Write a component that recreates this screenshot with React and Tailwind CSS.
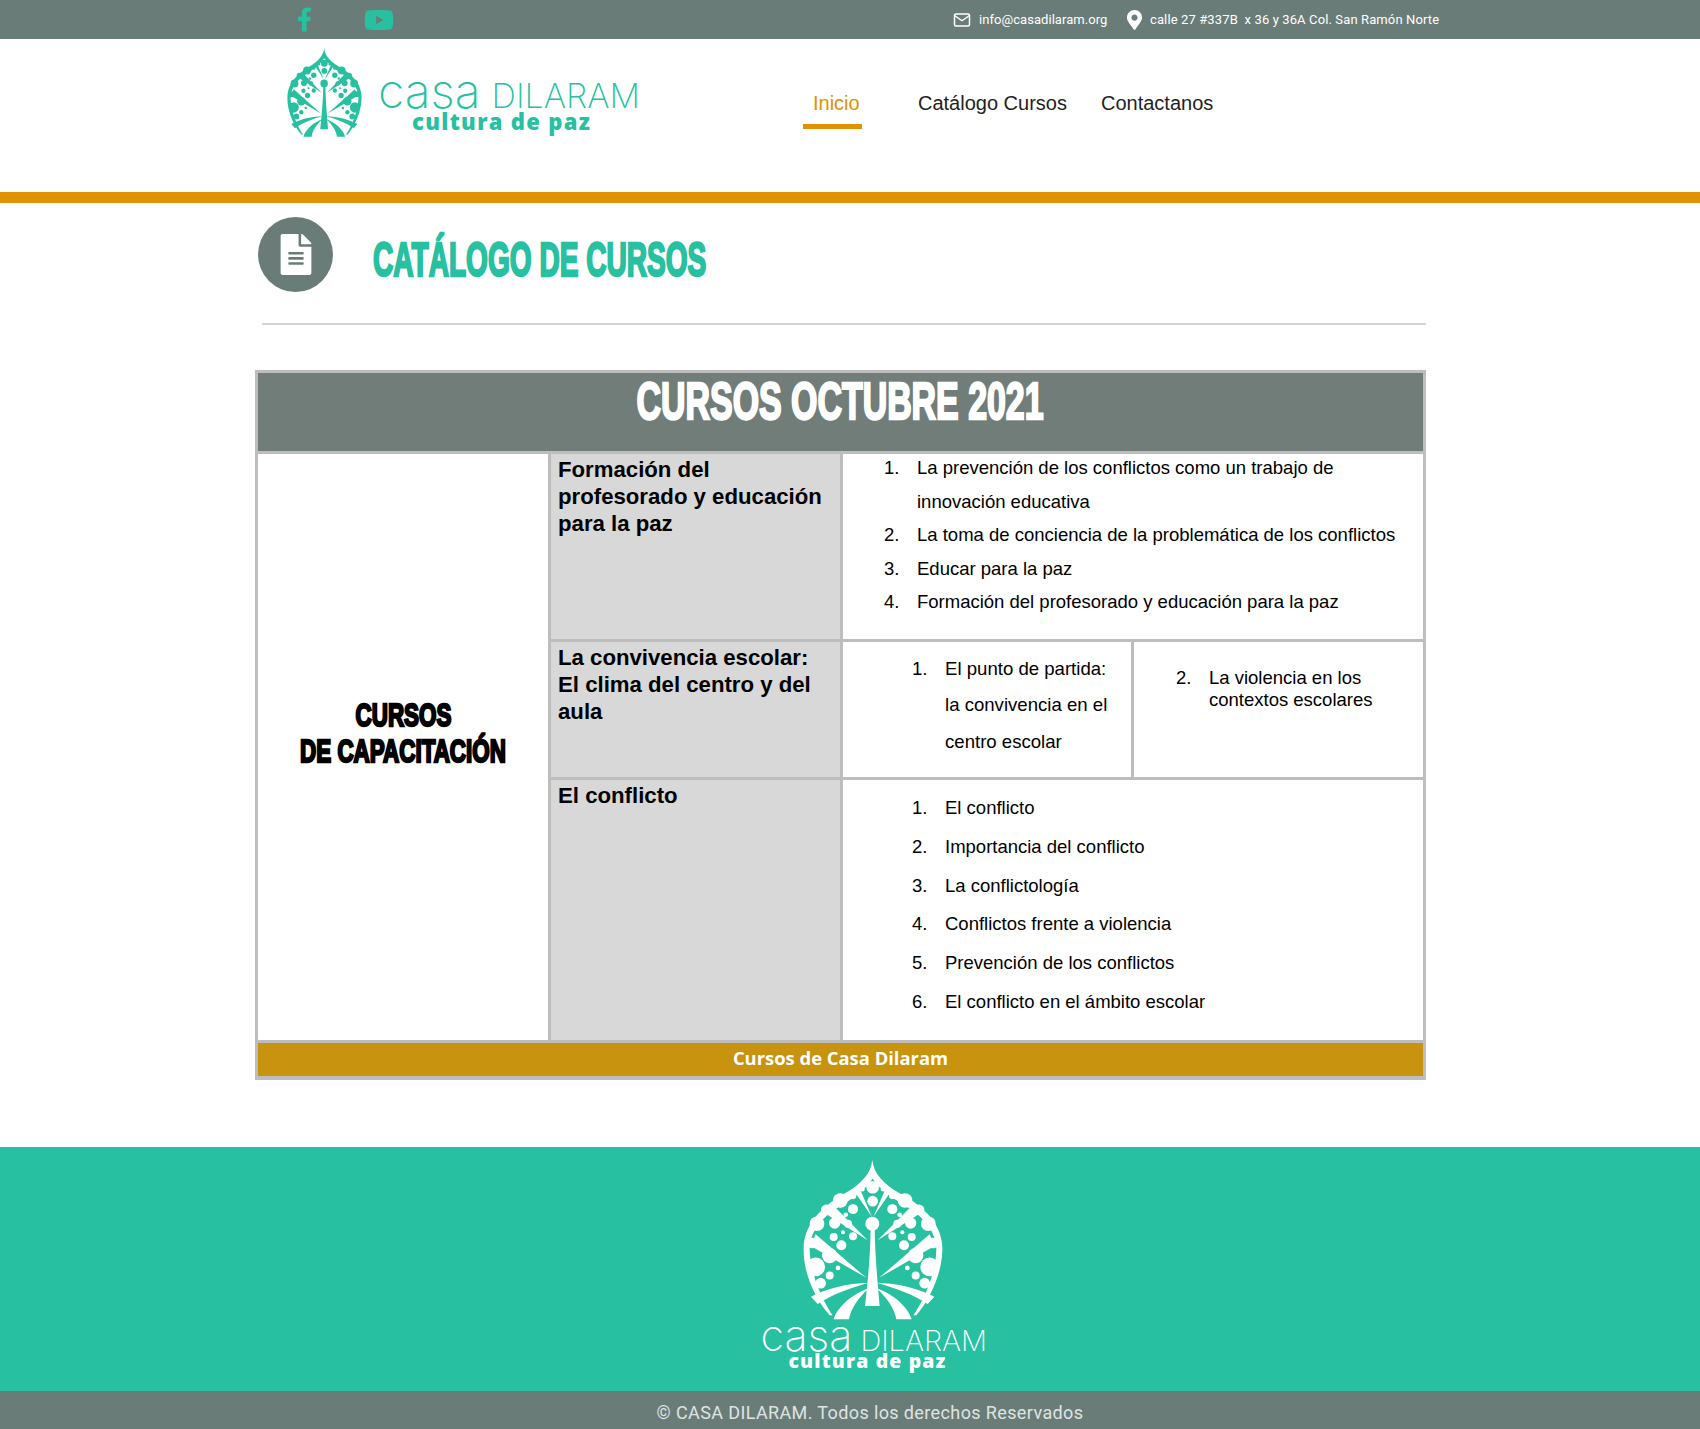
import React from 'react';
import { FaFacebookF, FaYoutube, FaMapMarkerAlt, FaFileAlt } from 'react-icons/fa';
import { FiMail } from 'react-icons/fi';

// no Impact on this box, so squeeze a heavy bold instead
const impact = "inline-block whitespace-nowrap font-bold [-webkit-text-stroke:2.4px_currentColor]";

function LeafHalf({ fg }) {
  const dots = [
    [178, 88, 7], [150, 148, 15], [95, 190, 17], [135, 192, 12], [128, 165, 7], [120, 218, 6],
    [92, 232, 12], [150, 230, 12], [115, 257, 15], [80, 288, 23], [38, 322, 28], [105, 325, 7],
    [80, 348, 12], [53, 371, 16], [42, 192, 22], [112, 122, 22], [70, 150, 16], [28, 250, 16],
    [150, 108, 10],
  ];
  return (
    <g fill={fg}>
      {dots.map(([cx, cy, r]) => (
        <circle key={`${cx}-${cy}`} cx={cx} cy={cy} r={r} />
      ))}
      <polygon points="194,242 88,134 68,162" />
      <polygon points="190,355 38,224 22,258" />
      <polygon points="207,172 154,94 170,86" />
      <path d="M198 370C130 372 70 388 24 412L44 434C90 404 140 386 198 370Z" />
      <path d="M198 386C150 402 104 440 92 480L138 480C142 450 166 414 198 386Z" />
    </g>
  );
}

// the casa dilaram leaf, same drawing in the header and the footer
function Leaf({ fg, bg, className }) {
  return (
    <svg viewBox="0 0 420 482" preserveAspectRatio="none" className={className}>
      <path
        fill={fg}
        d="M208 0C212 40 240 72 290 100C372 145 420 200 418 272C416 350 376 425 340 468L80 468C42 425 2 350 2 272C0 200 48 145 126 100C176 72 204 40 208 0Z"
      />
      <path
        fill={bg}
        d="M209 56C228 86 262 110 300 134C370 174 400 220 400 272C398 340 366 420 322 482L98 482C54 420 22 340 20 272C20 220 50 174 120 134C158 110 190 86 209 56Z"
      />
      <LeafHalf fg={fg} />
      <g transform="matrix(-1 0 0 1 418 0)">
        <LeafHalf fg={fg} />
      </g>
      <circle cx="209" cy="82" r="19" fill={fg} />
      <circle cx="209" cy="124" r="16" fill={fg} />
      <circle cx="208" cy="192" r="21" fill={fg} />
      <path fill={fg} d="M203 205L215 205C216 290 224 370 230 440L186 440C194 370 202 290 203 205Z" />
    </svg>
  );
}

function Wordmark({ wordClass, casaClass, gapClass, subClass }) {
  return (
    <div className="flex flex-col items-start">
      <div className={`flex items-baseline font-['Inter',sans-serif] font-extralight leading-none ${wordClass}`}>
        <span className={casaClass}>casa</span>
        <span className={gapClass}>DILARAM</span>
      </div>
      <div className={`font-['Open_Sans',sans-serif] font-extrabold leading-none tracking-[0.06em] ${subClass}`}>
        cultura de paz
      </div>
    </div>
  );
}

function NumList({ items, start = 1, lineClass, numClass, textClass }) {
  return (
    <div className={`flex flex-col text-black ${lineClass}`}>
      {items.map((item, i) => (
        <div key={item} className="flex">
          <span className={`shrink-0 ${numClass}`}>{start + i}.</span>
          <span className={textClass}>{item}</span>
        </div>
      ))}
    </div>
  );
}

export default function App() {
  return (
    <div className="min-h-[1429px] overflow-hidden bg-white font-['Liberation_Sans',Arial,sans-serif]">
      {/* top bar */}
      <div className="flex h-[39px] items-center bg-[#6a7c78] pl-[297px] text-[13px] text-white">
        <FaFacebookF className="h-[25px] w-[15px] text-[#27c0a0]" />
        <FaYoutube className="ml-[52px] h-[30px] w-[30px] text-[#27c0a0]" />
        <FiMail className="ml-[559px] h-[18px] w-[18px]" />
        <span className="ml-[8px] w-[128px] whitespace-nowrap font-['Roboto',sans-serif] tracking-[0.05px]">info@casadilaram.org</span>
        <FaMapMarkerAlt className="ml-[20px] h-[20px] w-[15px]" />
        <span className="ml-[8px] whitespace-pre font-['Roboto',sans-serif] tracking-[0.12px]">
          calle 27 #337B  x 36 y 36A Col. San Ramón Norte
        </span>
      </div>

      {/* header */}
      <div className="flex h-[153px] pl-[287px]">
        <Leaf fg="#27c0a0" bg="#ffffff" className="mt-[9px] h-[89px] w-[75px]" />
        <div className="ml-[16px] mt-[28px] w-[255px] text-[#27c0a0]">
          <Wordmark
            wordClass="text-[34px]"
            casaClass="text-[48px]"
            gapClass="ml-[11px]"
            subClass="-mt-[5px] ml-[34px] text-[22px]"
          />
        </div>
        <div className="ml-[170px] mt-[50px] flex h-[40px] flex-col">
          <span className="pl-[10px] text-[20px] leading-[28px] text-[#e09200]">Inicio</span>
          <span className="mt-[7px] h-[5px] w-[59px] bg-[#e09200]" />
        </div>
        <span className="ml-[56px] mt-[50px] text-[20px] leading-[28px] text-[#222]">Catálogo Cursos</span>
        <span className="ml-[34px] mt-[50px] text-[20px] leading-[28px] text-[#222]">Contactanos</span>
      </div>
      <div className="h-[11px] bg-[#e09200]" />

      {/* page title */}
      <div className="ml-[258px] mt-[14px] flex items-center">
        <div className="flex h-[75px] w-[75px] items-center justify-center rounded-full bg-[#6a7c78]">
          <FaFileAlt className="h-[41px] w-[32px] text-white" />
        </div>
        <h1 className={`ml-[40px] mt-[10px] origin-left scale-x-[0.585] text-[48px] leading-[52px] text-[#27c0a0] ${impact}`}>
          CATÁLOGO DE CURSOS
        </h1>
      </div>
      <div className="ml-[262px] mt-[31px] h-[2px] w-[1164px] bg-[#d4d4d4]" />

      {/* course table */}
      <div className="ml-[255px] mt-[45px] grid w-[1171px] grid-cols-[290px_289px_288px_289px] grid-rows-[78px_185px_135px_260px_33px] gap-[3px] bg-[#bdbdbd] p-[3px] pb-[4px]">
        <div className="col-span-4 bg-[#707d79] text-center">
          <span className={`origin-center scale-x-[0.652] text-[52px] leading-[56px] text-white ${impact}`}>
            CURSOS OCTUBRE 2021
          </span>
        </div>

        <div className="row-span-3 flex flex-col items-center justify-center bg-white pb-[28px] text-center text-[32px] leading-[36px] text-black">
          <span className={`origin-center scale-x-[0.7] ${impact}`}>CURSOS</span>
          <span className={`origin-center scale-x-[0.7] ${impact}`}>DE CAPACITACIÓN</span>
        </div>

        <div className="bg-[#d8d8d8] px-[7px] pt-[2px] text-[22.2px] font-bold leading-[27px] text-black">
          Formación del profesorado y educación para la paz
        </div>
        <div className="col-span-2 bg-white pl-[41px]">
          <div className="-mt-[3px]">
            <NumList
              lineClass="text-[18.5px] leading-[33.5px]"
              numClass="w-[33px]"
              textClass="w-[490px]"
              items={[
                'La prevención de los conflictos como un trabajo de innovación educativa',
                'La toma de conciencia de la problemática de los conflictos',
                'Educar para la paz',
                'Formación del profesorado y educación para la paz',
              ]}
            />
          </div>
        </div>

        <div className="bg-[#d8d8d8] px-[7px] pt-[2px] text-[22.2px] font-bold leading-[27px] text-black">
          La convivencia escolar: El clima del centro y del aula
        </div>
        <div className="bg-white pl-[69px] pt-[9px]">
          <NumList
            lineClass="text-[18.6px] leading-[36.4px]"
            numClass="w-[33px]"
            textClass="w-[172px]"
            items={['El punto de partida: la convivencia en el centro escolar']}
          />
        </div>
        <div className="bg-white pl-[42px] pt-[25px]">
          <NumList
            start={2}
            lineClass="text-[18.5px] leading-[22px]"
            numClass="w-[33px]"
            textClass="w-[190px]"
            items={['La violencia en los contextos escolares']}
          />
        </div>

        <div className="bg-[#d8d8d8] px-[7px] pt-[2px] text-[22.2px] font-bold leading-[27px] text-black">El conflicto</div>
        <div className="col-span-2 bg-white pl-[69px] pt-[9px]">
          <NumList
            lineClass="text-[18.5px] leading-[38.8px]"
            numClass="w-[33px]"
            items={[
              'El conflicto',
              'Importancia del conflicto',
              'La conflictología',
              'Conflictos frente a violencia',
              'Prevención de los conflictos',
              'El conflicto en el ámbito escolar',
            ]}
          />
        </div>

        <div className="col-span-4 bg-[#c8930f] text-center font-['Open_Sans',sans-serif] text-[18.4px] font-bold leading-[30px] text-white">
          Cursos de Casa Dilaram
        </div>
      </div>

      {/* footer */}
      <div className="mt-[67px] flex h-[244px] flex-col items-center bg-[#27c0a0] pl-[46px]">
        <Leaf fg="#ffffff" bg="#27c0a0" className="mt-[13px] h-[160px] w-[140px]" />
        <div className="-mt-[6px] w-[225px] text-white">
          <Wordmark
            wordClass="text-[29px]"
            casaClass="text-[43px]"
            gapClass="ml-[8px]"
            subClass="-mt-[6px] ml-[28px] text-[19.4px]"
          />
        </div>
      </div>
      <div className="flex h-[38px] items-center justify-center bg-[#6a7c78] pl-[40px] pt-[4px] font-['Roboto',sans-serif] text-[18px] tracking-[0.38px] text-[#dfe4e3]">
        © CASA DILARAM. Todos los derechos Reservados
      </div>
    </div>
  );
}
